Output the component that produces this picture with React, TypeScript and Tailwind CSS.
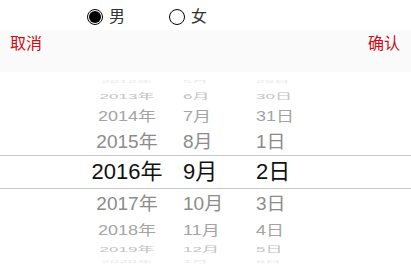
import React from "react";

type Row = {
  y: string;
  m: string;
  d: string;
  h: string;
  text: string;
  tone: string;
  squash: string;
};

const rows: Row[] = [
  { y: "2012年", m: "5月", d: "29日", h: "h-[12px]", text: "text-[16px]", tone: "text-[#e8e8e8]", squash: "scale-y-[0.2]" },
  { y: "2013年", m: "6月", d: "30日", h: "h-[17px]", text: "text-[17px]", tone: "text-[#c2c2c2]", squash: "scale-y-[0.45]" },
  { y: "2014年", m: "7月", d: "31日", h: "h-[22px]", text: "text-[18px]", tone: "text-[#a4a4a4]", squash: "scale-y-[0.78]" },
  { y: "2015年", m: "8月", d: "1日", h: "h-[28px]", text: "text-[19px]", tone: "text-[#8c8c8c]", squash: "scale-y-[0.93]" },
  { y: "2016年", m: "9月", d: "2日", h: "h-[34px]", text: "text-[22px]", tone: "text-[#111]", squash: "" },
  { y: "2017年", m: "10月", d: "3日", h: "h-[28px]", text: "text-[19px]", tone: "text-[#8c8c8c]", squash: "scale-y-[0.93]" },
  { y: "2018年", m: "11月", d: "4日", h: "h-[26px]", text: "text-[18px]", tone: "text-[#a4a4a4]", squash: "scale-y-[0.78]" },
  { y: "2019年", m: "12月", d: "5日", h: "h-[13px]", text: "text-[17px]", tone: "text-[#c2c2c2]", squash: "scale-y-[0.45]" },
  { y: "2020年", m: "1月", d: "6日", h: "h-[11px]", text: "text-[16px]", tone: "text-[#e8e8e8]", squash: "scale-y-[0.2]" },
];

const font = "font-['Liberation_Sans','Noto_Sans_CJK_SC',sans-serif]";

export default function App() {
  const [sex, setSex] = React.useState<"m" | "f">("m");

  return (
    <div className={`w-[411px] h-[273px] bg-white overflow-hidden ${font}`}>
      {/* gender radios */}
      <div className="h-[30px] pt-[4px] pl-[87px] flex items-center">
        <button className="flex items-center gap-[6px]" onClick={() => setSex("m")}>
          <span className="w-[16px] h-[16px] rounded-full border border-black flex items-center justify-center">
            {sex === "m" && <span className="w-[12px] h-[12px] rounded-full bg-black" />}
          </span>
          <span className="text-[16px] leading-[20px] text-[#333]">男</span>
        </button>
        <button className="ml-[44px] flex items-center gap-[6px]" onClick={() => setSex("f")}>
          <span className="w-[16px] h-[16px] rounded-full border border-black flex items-center justify-center">
            {sex === "f" && <span className="w-[12px] h-[12px] rounded-full bg-black" />}
          </span>
          <span className="text-[16px] leading-[20px] text-[#333]">女</span>
        </button>
      </div>

      {/* toolbar */}
      <div className="h-[42px] bg-[#fafafa] flex items-start justify-between pt-[4px] px-[10px]">
        <span className="text-[16px] leading-[20px] text-[#cc0a14]">取消</span>
        <span className="text-[16px] leading-[20px] text-[#cc0a14] mr-px">确认</span>
      </div>

      {/* date wheel */}
      <div className="pt-[4px]">
        {rows.map((r, i) => (
          <div
            key={i}
            className={`${r.h} flex items-center ${r.tone} ${
              i === 4 ? "border-y border-[#c8c8c8]" : ""
            }`}
          >
            <div className={`flex items-center w-full ${r.squash}`}>
              <span className={`w-[80px] ml-[87px] text-center whitespace-nowrap ${r.text} leading-none`}>
                {r.y}
              </span>
              <span className={`w-[73px] ml-[16px] whitespace-nowrap ${r.text} leading-none`}>
                {r.m}
              </span>
              <span className={`whitespace-nowrap ${r.text} leading-none`}>{r.d}</span>
            </div>
          </div>
        ))}
      </div>
    </div>
  );
}
